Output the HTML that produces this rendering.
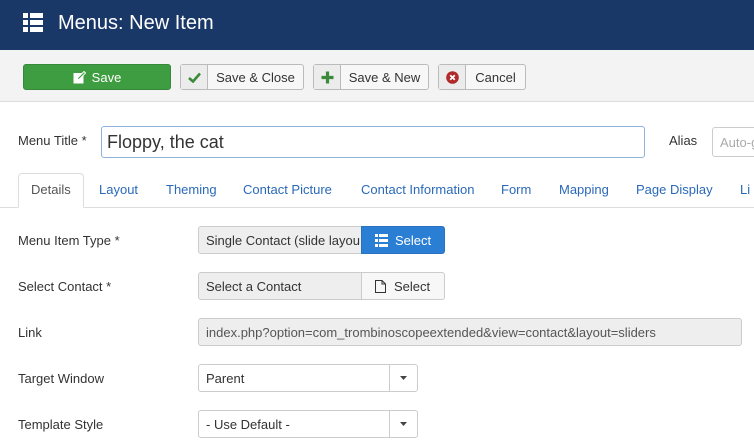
<!DOCTYPE html>
<html><head><style>
*{box-sizing:border-box;margin:0;padding:0}
body{width:754px;height:446px;overflow:hidden;background:#fff;font-family:"Liberation Sans",sans-serif;font-size:13px;color:#333;position:relative}
.a{position:absolute}
.hdr{left:0;top:0;width:754px;height:50px;background:#1a3867;color:#fff}
.tb{left:0;top:50px;width:754px;height:52px;background:#f3f3f3;border-bottom:1px solid #ddd}
.btn{position:absolute;top:64px;height:26px;border:1px solid #bbb;border-radius:3px;background:#f7f7f7;display:flex;align-items:center;font-size:13px;color:#333}
.btn .ic{width:27px;height:100%;border-right:1px solid #bbb;background:#ececec;display:flex;align-items:center;justify-content:center}
.btn .t{flex:1;text-align:center}
.lbl{position:absolute;left:18px;font-size:13px;color:#333}
.inp{position:absolute;height:28px;border:1px solid #ccc;border-radius:3px;display:flex;align-items:center;padding-left:7px;font-size:13px}
.tab{position:absolute;top:182px;color:#2a69b8;font-size:13px}
</style></head><body>
<div class="a hdr">
 <svg class="a" style="left:23px;top:13px" width="20" height="20" viewBox="0 0 20 20" fill="#fff"><rect x="0" y="0" width="5" height="5"/><rect x="7" y="0" width="13" height="5"/><rect x="0" y="7" width="5" height="5"/><rect x="7" y="7" width="13" height="5"/><rect x="0" y="14" width="5" height="5"/><rect x="7" y="14" width="13" height="5"/></svg>
 <div class="a" style="left:58px;top:12px;font-size:20px">Menus: New Item</div>
</div>
<div class="a tb"></div>
<div class="btn" style="left:23px;width:148px;background:#3e9d40;border-color:#37883a;color:#fff;justify-content:center">
 <svg width="13" height="13" viewBox="0 0 13 13" style="margin-right:6px"><rect x="0.5" y="2" width="10" height="10.5" fill="#fff"/><path d="M4 9 L5 6.5 L11 0.5 L12.5 2 L6.5 8 Z" fill="#3e9d40" stroke="#fff" stroke-width="1"/></svg>Save</div>
<div class="btn" style="left:180px;width:124px"><div class="ic"><svg width="13" height="11" viewBox="0 0 13 11"><path d="M1 6 L5 9.5 L12 1.5" stroke="#3a8a3a" stroke-width="2.6" fill="none"/></svg></div><div class="t">Save &amp; Close</div></div>
<div class="btn" style="left:313px;width:116px"><div class="ic"><svg width="13" height="13" viewBox="0 0 13 13"><path d="M6.5 0.5V12.5M0.5 6.5H12.5" stroke="#3a8a3a" stroke-width="3.2"/></svg></div><div class="t">Save &amp; New</div></div>
<div class="btn" style="left:438px;width:88px"><div class="ic"><svg width="13" height="13" viewBox="0 0 13 13"><circle cx="6.5" cy="6.5" r="6.3" fill="#b02a2a"/><path d="M4.2 4.2L8.8 8.8M8.8 4.2L4.2 8.8" stroke="#fff" stroke-width="1.8"/></svg></div><div class="t">Cancel</div></div>

<div class="lbl" style="top:133px">Menu Title *</div>
<div class="inp" style="left:101px;top:126px;width:544px;height:32px;border-color:#8fb3da;font-size:18px;padding-left:5px">Floppy, the cat</div>
<div class="lbl" style="left:669px;top:133px">Alias</div>
<div class="inp" style="left:712px;top:127px;width:60px;height:30px;color:#aaa">Auto-g</div>

<div class="a" style="left:0;top:207px;width:754px;border-top:1px solid #ddd"></div>
<div class="a" style="left:18px;top:173px;width:66px;height:35px;border:1px solid #ddd;border-bottom:1px solid #fff;border-radius:4px 4px 0 0;background:#fff"></div>
<div class="tab" style="left:31px;color:#555">Details</div>
<div class="tab" style="left:99px">Layout</div>
<div class="tab" style="left:166px">Theming</div>
<div class="tab" style="left:243px">Contact Picture</div>
<div class="tab" style="left:361px">Contact Information</div>
<div class="tab" style="left:501px">Form</div>
<div class="tab" style="left:559px">Mapping</div>
<div class="tab" style="left:636px">Page Display</div>
<div class="tab" style="left:740px">Li</div>

<div class="lbl" style="top:233px">Menu Item Type *</div>
<div class="inp" style="left:198px;top:226px;width:166px;background:#eee;border-radius:3px 0 0 3px;overflow:hidden;white-space:nowrap">Single Contact (slide layou</div>
<div class="inp" style="left:361px;top:226px;width:84px;background:#2a7fd4;border-color:#2a72c0;color:#fff;border-radius:0 3px 3px 0;padding-left:13px">
 <svg width="13" height="13" viewBox="0 0 13 13" fill="#fff" style="margin-right:7px"><rect x="0" y="0" width="3" height="3"/><rect x="4" y="0" width="9" height="3"/><rect x="0" y="5" width="3" height="3"/><rect x="4" y="5" width="9" height="3"/><rect x="0" y="10" width="3" height="3"/><rect x="4" y="10" width="9" height="3"/></svg>Select</div>

<div class="lbl" style="top:279px">Select Contact *</div>
<div class="inp" style="left:198px;top:272px;width:166px;background:#eee;border-radius:3px 0 0 3px">Select a Contact</div>
<div class="inp" style="left:361px;top:272px;width:84px;background:#f7f7f7;border-radius:0 3px 3px 0;padding-left:13px">
 <svg width="11" height="13" viewBox="0 0 11 13" style="margin-right:8px"><path d="M0.5 0.5H7L10.5 4V12.5H0.5Z" fill="none" stroke="#333"/><path d="M7 0.5V4H10.5" fill="none" stroke="#333"/></svg>Select</div>

<div class="lbl" style="top:325px">Link</div>
<div class="inp" style="left:198px;top:318px;width:544px;background:#eee;color:#555">index.php?option=com_trombinoscopeextended&amp;view=contact&amp;layout=sliders</div>

<div class="lbl" style="top:371px">Target Window</div>
<div class="inp" style="left:198px;top:364px;width:220px">Parent</div>
<div class="a" style="left:389px;top:365px;width:28px;height:26px;border-left:1px solid #ccc;display:flex;align-items:center;justify-content:center"><svg width="7" height="4"><path d="M0 0H7L3.5 4Z" fill="#444"/></svg></div>

<div class="lbl" style="top:417px">Template Style</div>
<div class="inp" style="left:198px;top:410px;width:220px">- Use Default -</div>
<div class="a" style="left:389px;top:411px;width:28px;height:26px;border-left:1px solid #ccc;display:flex;align-items:center;justify-content:center"><svg width="7" height="4"><path d="M0 0H7L3.5 4Z" fill="#444"/></svg></div>
</body></html>
